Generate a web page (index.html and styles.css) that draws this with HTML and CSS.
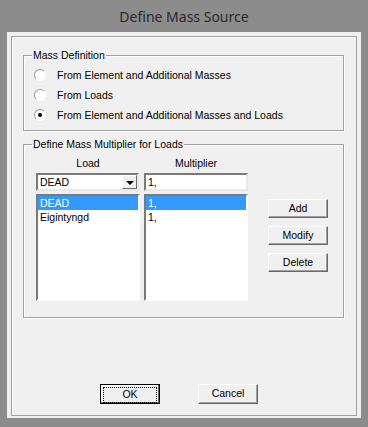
FILE: index.html
```html
<!DOCTYPE html>
<html lang="en">
<head>
  <meta charset="UTF-8" />
  <title>Define Mass Source</title>
  <link rel="stylesheet" href="styles.css">
</head>
<body>

<div class="window">
  <div class="title">Define Mass Source</div>
  <div class="client">
    <div class="frame">

      <fieldset class="group group-mass">
        <legend>Mass Definition</legend>
        <div class="radio-row"><span class="radio"></span>From Element and Additional Masses</div>
        <div class="radio-row"><span class="radio"></span>From Loads</div>
        <div class="radio-row"><span class="radio checked"></span>From Element and Additional Masses and Loads</div>
      </fieldset>

      <fieldset class="group group-loads">
        <legend>Define Mass Multiplier for Loads</legend>
        <div class="loads-grid">
          <div class="col-head">Load</div>
          <div class="col-head">Multiplier</div>
          <div></div>

          <div class="combo">
            <span class="combo-text">DEAD</span>
            <span class="combo-btn"><span class="arrow"></span></span>
          </div>
          <div class="textbox">1,</div>
          <div></div>

          <div class="listbox">
            <div class="item selected">DEAD</div>
            <div class="item">Eigintyngd</div>
          </div>
          <div class="listbox">
            <div class="item selected">1,</div>
            <div class="item">1,</div>
          </div>
          <div class="side-buttons">
            <div class="btn">Add</div>
            <div class="btn">Modify</div>
            <div class="btn">Delete</div>
          </div>
        </div>
      </fieldset>

      <div class="dialog-buttons">
        <div class="btn btn-default"><span class="focus">OK</span></div>
        <div class="btn">Cancel</div>
      </div>

    </div>
  </div>
</div>

</body>
</html>
```

FILE: styles.css
```css
body {
  margin: 0;
  background: #8c8c8c;
  font-family: "Liberation Sans", Arial, sans-serif;
  font-size: 10.5px;
  color: #000;
}

.window {
  width: 368px;
  height: 427px;
  background: #8c8c8c;
}

.title {
  height: 32px;
  line-height: 33px;
  text-align: center;
  font-family: "Noto Sans", sans-serif;
  font-size: 14px;
  color: #2a2a2a;
}

.client {
  margin: 0 7px;
  height: 386px;
  padding: 4px;
  box-sizing: border-box;
  background: #f0f0f0;
}

.frame {
  height: 378px;
  border: 1px solid #a0a0a0;
  box-shadow: inset 1px 1px 0 #fff;
  display: flex;
  flex-direction: column;
}

.group {
  box-sizing: border-box;
  width: 321px;
  margin: 0 0 0 11px;
  padding: 0 0 0 8px;
  border: 1px solid #a0a0a0;
  box-shadow: 1px 1px 0 #fff, inset 1px 1px 0 #fff;
  min-width: 0;
}

.group legend {
  padding: 0 1px;
  line-height: 13px;
}

.group-mass {
  margin-top: 12px;
  padding-top: 3px;
  padding-bottom: 5px;
}

.radio-row {
  height: 20px;
  display: flex;
  align-items: center;
  margin-left: 2px;
}

.radio {
  width: 12px;
  height: 12px;
  box-sizing: border-box;
  border-radius: 50%;
  border: 1px solid;
  border-color: #9a9a9a #fff #fff #9a9a9a;
  background: #fff;
  margin-right: 11px;
  display: flex;
  align-items: center;
  justify-content: center;
}

.radio.checked::after {
  content: "";
  width: 4px;
  height: 4px;
  border-radius: 50%;
  background: #000;
}

.group-loads {
  margin-top: 7px;
  padding-top: 6px;
  padding-bottom: 16px;
}

.loads-grid {
  margin-left: 4px;
  display: grid;
  grid-template-columns: 104px 104px 60px;
  grid-template-rows: 13px 18px 107px;
  column-gap: 4px;
  row-gap: 3px;
}

.loads-grid > :nth-child(3n) {
  margin-left: 16px;
}

.col-head {
  text-align: center;
  line-height: 13px;
}

.combo, .textbox, .listbox {
  box-sizing: border-box;
  background: #fff;
  border: 2px solid;
  border-color: #7a7a7a #e8e8e8 #e8e8e8 #7a7a7a;
}

.combo {
  width: 103px;
  display: flex;
  align-items: stretch;
}

.combo-text {
  flex: 1;
  padding-left: 2px;
  line-height: 14px;
}

.combo-btn {
  width: 15px;
  box-sizing: border-box;
  background: #f0f0f0;
  border: 1px solid;
  border-color: #fff #6a6a6a #6a6a6a #fff;
  display: flex;
  align-items: center;
  justify-content: center;
}

.arrow {
  width: 0;
  height: 0;
  border-left: 4px solid transparent;
  border-right: 4px solid transparent;
  border-top: 4px solid #000;
  margin-top: 1px;
}

.textbox {
  padding-left: 2px;
  line-height: 14px;
}

.listbox {
  border-bottom-color: #fff;
  border-right-color: #fff;
}

.item {
  height: 14px;
  line-height: 14px;
  padding-left: 2px;
}

.item.selected {
  background: #3399ff;
  color: #fff;
}

.side-buttons {
  padding-top: 5px;
  display: flex;
  flex-direction: column;
  gap: 8px;
}

.btn {
  box-sizing: border-box;
  width: 60px;
  height: 19px;
  line-height: 16px;
  text-align: center;
  background: #f0f0f0;
  border: 1px solid;
  border-color: #fff #696969 #696969 #fff;
  box-shadow: inset -1px -1px 0 #a0a0a0;
}

.dialog-buttons {
  margin-top: 66px;
  padding-left: 88px;
  display: flex;
  gap: 38px;
}

.dialog-buttons .btn {
  height: 20px;
  line-height: 17px;
}

.btn-default {
  border: 1px solid #000;
  box-shadow: inset -1px -1px 0 #696969, inset 1px 1px 0 #fff;
  padding: 2px;
}

.btn-default .focus {
  display: block;
  height: 14px;
  line-height: 12px;
  border: 1px dotted #000;
}
```
